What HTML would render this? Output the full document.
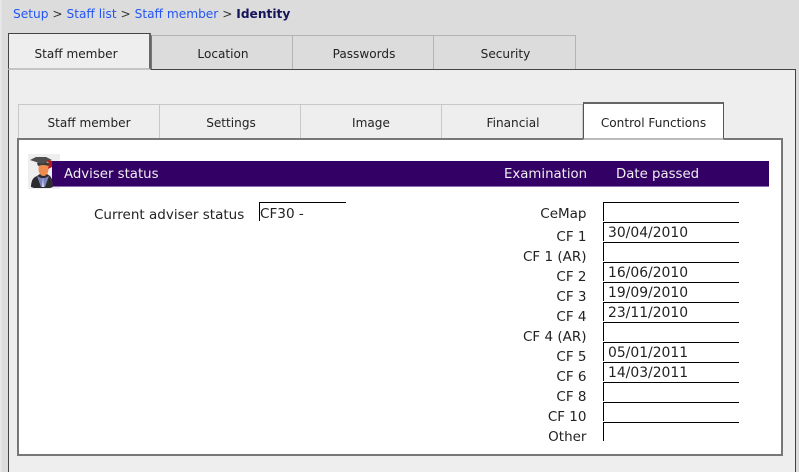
<!DOCTYPE html>
<html><head><meta charset="utf-8"><style>
html,body{margin:0;padding:0;overflow:hidden}
body{width:799px;height:472px;background:#dcdcdc;font:13.5px "DejaVu Sans",sans-serif;color:#222}
#w{position:absolute;left:0;top:0;width:799px;height:472px;overflow:hidden;background:#dcdcdc}
#w div{position:absolute;box-sizing:border-box}
.t{white-space:nowrap}
#w .tab{text-align:center;line-height:36px;white-space:nowrap;font-size:12.1px}
#w .o{top:35px;height:34px;background:#dcdcdc;border:1px solid #b4b4b4;border-bottom:0;border-left:0;padding-left:2px}
#w .i{top:104px;height:34px;background:#eee;border:1px solid #c8c8c8;border-bottom:0;border-left:0}
#w .l{left:459px;width:127.500px;text-align:right;white-space:nowrap;line-height:16px}
#w .f{left:603px;width:136px;height:19px;border-top:1px solid #000;border-left:1px solid #000;padding-left:4px;line-height:21px;white-space:nowrap;font-size:13.9px}
#w .h{color:#eee;line-height:16px;top:167px;font-size:13.3px;white-space:nowrap}
</style></head><body><div id="w">
<div style="left:0;top:0;width:2px;height:472px;background:#e6e6e6"></div>
<div class="t" style="left:13px;top:6px;line-height:16px;color:#333;font-size:12.2px"><span style="color:#2255f5">Setup</span> &gt; <span style="color:#2255f5">Staff list</span> &gt; <span style="color:#2255f5">Staff member</span> &gt; <b style="color:#14145a">Identity</b></div>

<div style="left:8px;top:69px;width:788px;height:420px;background:#eee;border:1px solid #444"></div>
<div class="tab o" style="left:151px;width:142px;border-left:1px solid #777">Location</div>
<div class="tab o" style="left:293px;width:141px">Passwords</div>
<div class="tab o" style="left:434px;width:142px">Security</div>
<div class="tab" style="left:8px;top:33px;width:143px;height:37px;background:#eee;border:1px solid #444;border-right:2px solid #666;border-bottom:2px solid #c4c4c4;line-height:40px;padding-right:6px">Staff member</div>

<div style="left:17px;top:138px;width:766px;height:318px;background:#fff;border:2px solid #777"></div>
<div class="tab i" style="left:18px;width:142px;border-left:1px solid #c8c8c8">Staff member</div>
<div class="tab i" style="left:160px;width:141px;padding-left:2px">Settings</div>
<div class="tab i" style="left:301px;width:141px">Image</div>
<div class="tab i" style="left:442px;width:141px;padding-left:2px">Financial</div>
<div class="tab" style="left:583px;top:102px;width:141px;height:38px;background:#fff;border:1px solid #555;border-top:2px solid #666;border-bottom:2px solid #bbb;line-height:38px">Control Functions</div>

<div style="left:28px;top:154px;width:32px;height:35px;background:#eee"></div>
<div style="left:52px;top:161px;width:717px;height:26px;background:#330066;border-bottom:1px solid #8a6fb0"></div>
<div class="h" style="left:64px">Adviser status</div>
<div class="h" style="left:504px">Examination</div>
<div class="h" style="left:616px">Date passed</div>

<svg style="position:absolute;left:28px;top:154px" width="32" height="35" viewBox="0 0 32 35">
<path d="M3 33 Q3 24 9 22 L12 20 H19 L22 22 Q25 25 25 33 L22 34 H6Z" fill="#2c2c30"/>
<path d="M9 22 L13 33 H17 L21 22 L17 24 H13Z" fill="#7c84bc"/>
<path d="M15 24 L16 33 H14Z" fill="#d8dcf0"/>
<ellipse cx="15.500" cy="15" rx="5" ry="7" fill="#ee8c50"/>
<path d="M9 9 Q15 7 21 9 V12 Q15 10 10 12Z" fill="#3a3a3a"/>
<path d="M2 6 L8 3 H18 L24 6 L14 10Z" fill="#4e4e50"/>
<path d="M18 6 L24 7 V13 L20 15 L21 9Z" fill="#b81a10"/>
</svg>

<div class="t" style="left:94px;top:207px;line-height:16px">Current adviser status</div>
<div class="t" style="left:259px;top:202px;width:87px;height:19px;border-top:1px solid #000;border-left:1px solid #000;line-height:22px;font-size:13.6px">CF30 -</div>

<div class="l" style="top:206px">CeMap</div><div class="f" style="top:202px"></div>
<div class="l" style="top:229px">CF 1</div><div class="f" style="top:222px">30/04/2010</div>
<div class="l" style="top:249px">CF 1 (AR)</div><div class="f" style="top:242px"></div>
<div class="l" style="top:269px">CF 2</div><div class="f" style="top:262px">16/06/2010</div>
<div class="l" style="top:289px">CF 3</div><div class="f" style="top:282px">19/09/2010</div>
<div class="l" style="top:309px">CF 4</div><div class="f" style="top:302px">23/11/2010</div>
<div class="l" style="top:329px">CF 4 (AR)</div><div class="f" style="top:322px"></div>
<div class="l" style="top:349px">CF 5</div><div class="f" style="top:342px">05/01/2011</div>
<div class="l" style="top:369px">CF 6</div><div class="f" style="top:362px">14/03/2011</div>
<div class="l" style="top:389px">CF 8</div><div class="f" style="top:382px"></div>
<div class="l" style="top:409px">CF 10</div><div class="f" style="top:402px"></div>
<div class="l" style="top:429px">Other</div><div class="f" style="top:422px"></div>
</div></body></html>
